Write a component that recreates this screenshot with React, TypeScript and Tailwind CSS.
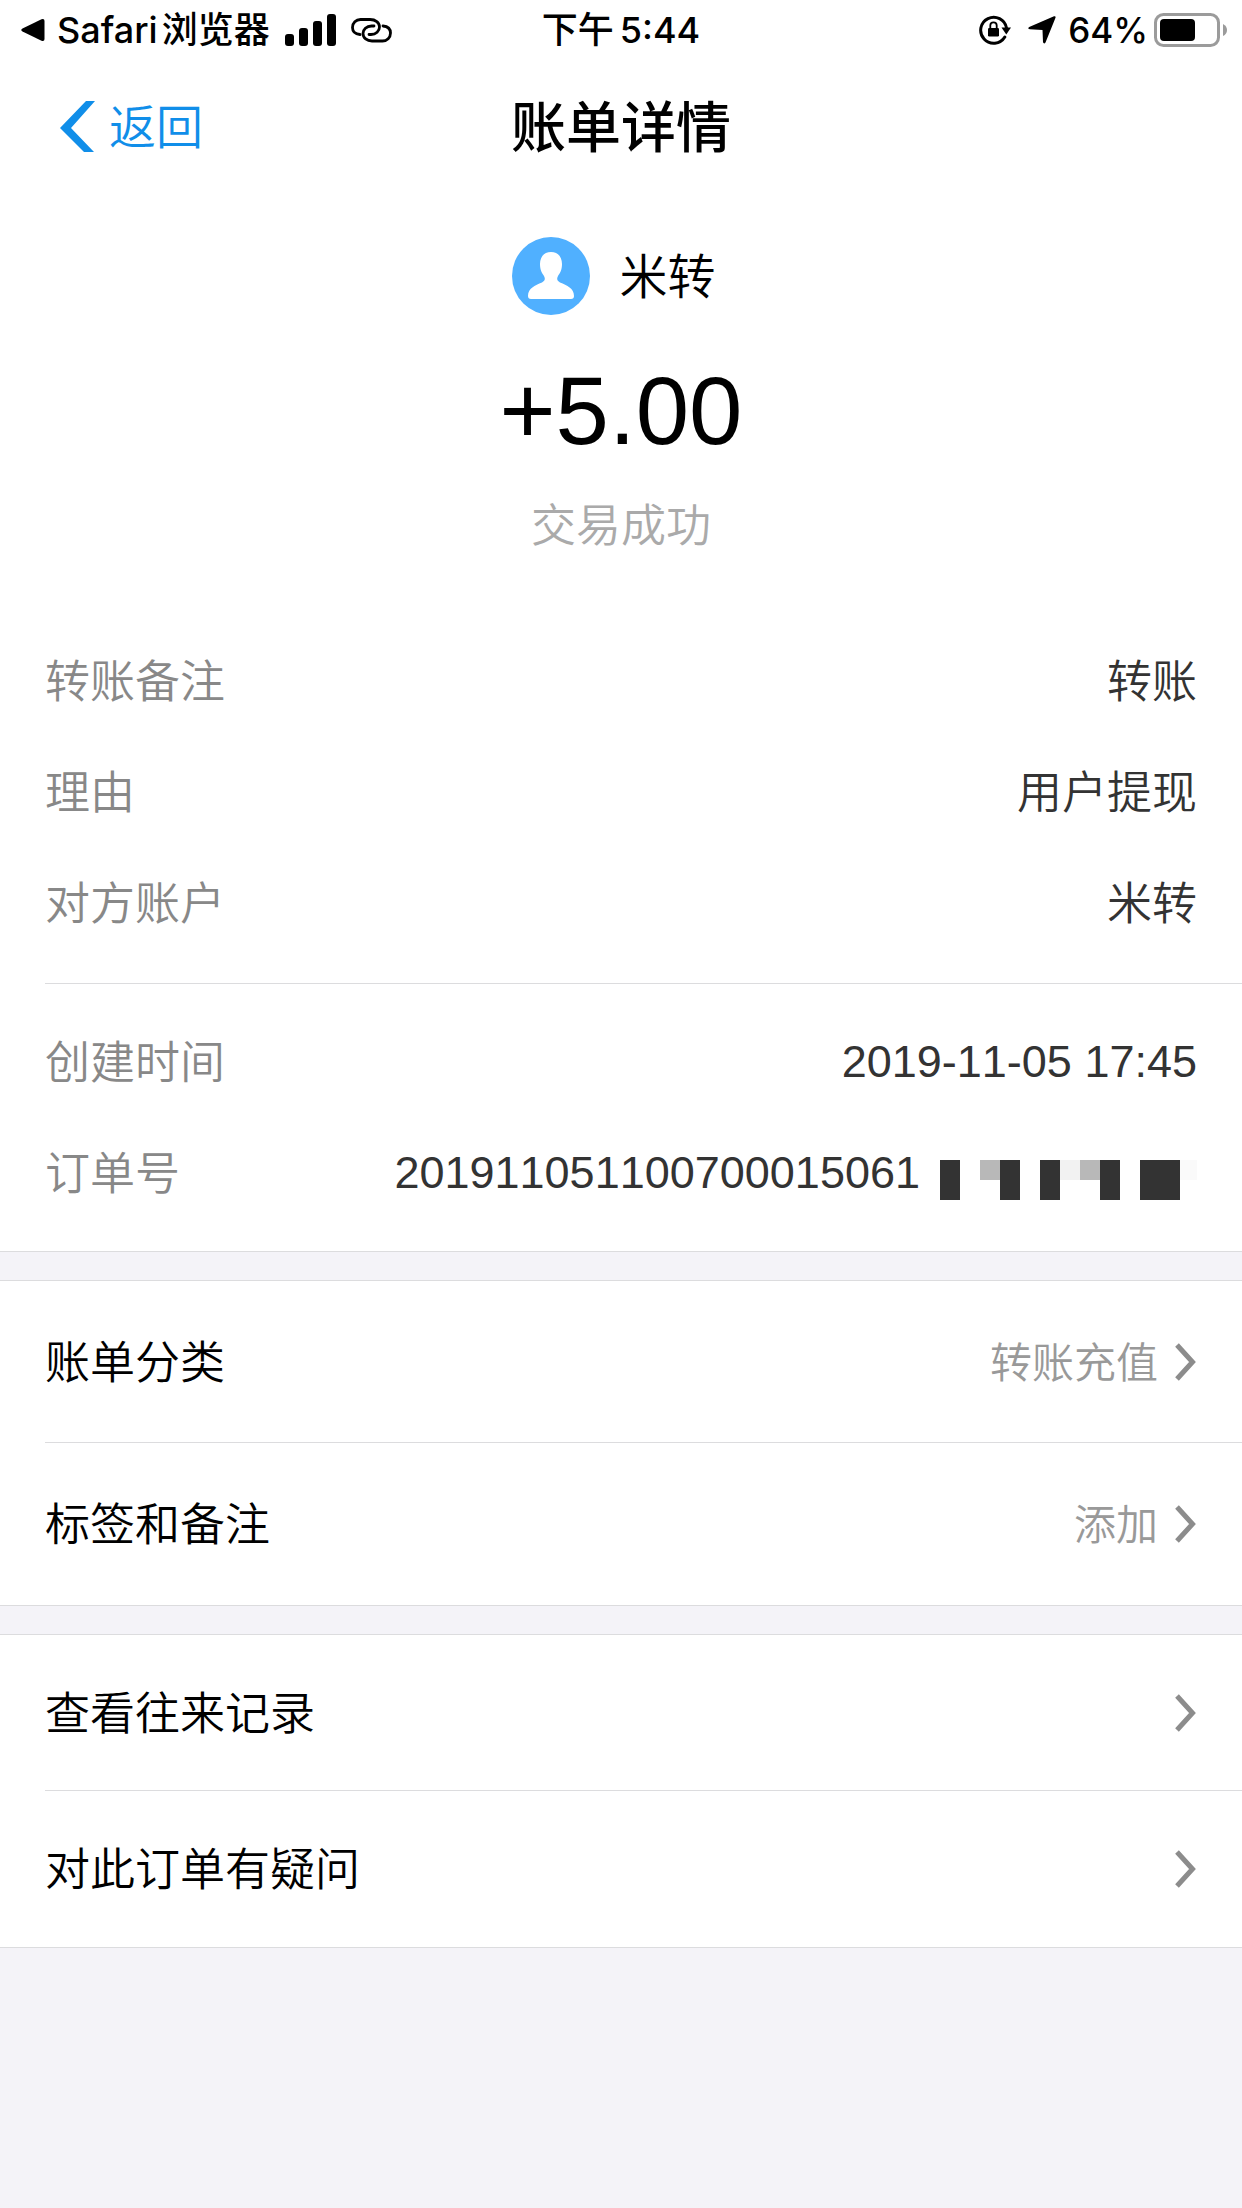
const details = [
  { label: "转账备注", value: "转账" },
  { label: "理由", value: "用户提现" },
  { label: "对方账户", value: "米转" },
];

const manageLinks = [
  { label: "账单分类", value: "转账充值" },
  { label: "标签和备注", value: "添加" },
];

const helpLinks = ["查看往来记录", "对此订单有疑问"];

function StatusBar() {
  return (
    <div className="grid h-[60px] grid-cols-[1fr_auto_1fr] items-center px-[15px] font-['Inter','Noto_Sans_CJK_SC',sans-serif] text-[36px] leading-[60px] font-medium whitespace-nowrap">
      <div className="flex items-center">
        <svg className="mr-3 ml-1.5 h-6 w-6" viewBox="0 0 24 24" aria-hidden="true">
          <path d="M1.5 10.5 20.5 1.2q3-1 3 1.8v18q0 2.8-3 1.8L1.5 13.5q-2.500-1.500 0-3z" />
        </svg>
        <span>Safari</span>
        <span className="ml-1">浏览器</span>
        <svg className="ml-[15px] h-8 w-[51px]" viewBox="0 0 51 32" aria-label="信号">
          <rect x="0" y="20" width="9" height="12" rx="3" />
          <rect x="14" y="14" width="9" height="18" rx="3" />
          <rect x="28" y="7" width="9" height="25" rx="3" />
          <rect x="42" y="0" width="9" height="32" rx="3" />
        </svg>
        <svg
          className="ml-[15px] h-[25px] w-[41px]"
          viewBox="0 0 41 25"
          fill="none"
          stroke="currentColor"
          strokeWidth="2.8"
          strokeLinecap="round"
          aria-hidden="true"
        >
          <path d="M9 16.500C4 16 1.500 13 1.500 9.500 1.500 5 5 1.500 9.500 1.500H19C24.500 1.500 28.500 4.500 28.500 9 28.500 13 25 16.500 20 16.500H18" />
          <path d="M32 8C37 8.500 39.500 11.500 39.500 15 39.500 19.500 36 23 31.500 23H21C16 23 12 20 12 15.500 12 11.500 15.500 8 20.500 8H23" />
        </svg>
      </div>
      <time className="flex gap-1.5">
        <span>下午</span>
        <span>5:44</span>
      </time>
      <div className="flex items-center justify-end">
        <svg className="h-[30px] w-8" viewBox="0 0 32 30" aria-label="方向锁定">
          <path
            d="M25.800 22A13 13 0 1 1 27.500 13"
            fill="none"
            stroke="currentColor"
            strokeWidth="3"
            strokeLinecap="round"
          />
          <path d="M22.500 12.500h9.500l-4.700 7z" />
          <rect x="9" y="13" width="11" height="8.500" rx="1.200" />
          <path d="M11.300 13.500v-3a3.200 3.200 0 0 1 6.400 0v3" fill="none" stroke="currentColor" strokeWidth="1.800" />
        </svg>
        <svg className="ml-[17px] h-7 w-7" viewBox="0 0 28 28" aria-label="定位">
          <path d="M26 .3q2-.5 1.500 1.500L17.500 26.500q-1.500 2-2.500-.2L14.500 14 1.700 13.300q-2.700-.8-.5-2.300z" />
        </svg>
        <span className="ml-3 text-[35px]">64%</span>
        <svg className="ml-1.5 h-[34px] w-[73px]" viewBox="0 0 73 34" aria-label="电量">
          <rect x="1.500" y="1.500" width="63" height="31" rx="8" fill="none" stroke="#9b9b9b" strokeWidth="3" />
          <rect x="6" y="6" width="35" height="22" rx="4" />
          <path d="M69 11q4 2 4 6t-4 6z" fill="#9b9b9b" />
        </svg>
      </div>
    </div>
  );
}

function NavBar() {
  return (
    <header className="grid h-[132px] grid-cols-[1fr_auto_1fr] items-center px-[60px]">
      <button type="button" className="flex items-center gap-3.5 justify-self-start text-[47px] leading-[60px] font-[350] text-[#108ee9]">
        <svg className="h-[51px] w-[35px]" viewBox="0 0 35 51" fill="currentColor" aria-hidden="true">
          <path d="M0 27 26 0h9L11 27l23 24H24z" />
        </svg>
        <span className="pt-1">返回</span>
      </button>
      <h1 className="pt-1 text-[55px] leading-[60px] font-medium">账单详情</h1>
    </header>
  );
}

function Avatar() {
  return (
    <svg className="h-[78px] w-[78px]" viewBox="0 0 78 78" aria-hidden="true">
      <circle cx="39" cy="39" r="39" fill="#50b0ff" />
      <path
        d="M39 15c7 0 11 5 11 12 0 6-2 9-4 12-1.500 3-1 5 2 6.500 7 3 14 5.500 14 13.500 0 2-1 3-3 3H19c-2 0-3-1-3-3 0-8 7-10.500 14-13.500 3-1.500 3.500-3.500 2-6.500-2-3-4-6-4-12 0-7 4-12 11-12z"
        fill="#fff"
      />
    </svg>
  );
}

function Mosaic() {
  return (
    <svg className="mb-7 h-10 w-[257px] self-end" viewBox="0 0 257 40" shapeRendering="crispEdges" aria-hidden="true">
      <path d="M0 0h20v40H0zM60 0h20v40H60zM100 0h20v40h-20zM160 0h20v40h-20zM200 0h40v40h-40z" fill="#333" />
      <path d="M40 0h20v20H40zM140 0h20v20h-20z" fill="#b8b8b8" />
      <path d="M120 0h20v20h-20z" fill="#f2f2f2" />
      <path d="M240 0h17v20h-17z" fill="#fafafa" />
    </svg>
  );
}

function DetailRow({ label, children }: { label: string; children: React.ReactNode }) {
  return (
    <div className="flex h-[111px] items-center justify-between pr-[45px]">
      <dt className="pt-1 text-[#888]">{label}</dt>
      <dd className="flex items-center gap-5 self-stretch text-[#333] [font-kerning:none]">{children}</dd>
    </div>
  );
}

function Chevron() {
  return (
    <svg
      className="h-[38px] w-[22px]"
      viewBox="0 0 22 38"
      fill="none"
      stroke="#8c8c8c"
      strokeWidth="5"
      aria-hidden="true"
    >
      <path d="M2 2 17.500 19 2 36" />
    </svg>
  );
}

export default function App() {
  return (
    <div className="min-h-screen bg-[#f4f3f8] font-['Liberation_Sans','Noto_Sans_CJK_SC',sans-serif] text-[45px] leading-[60px] font-[350] text-black">
      <div className="border-b border-[#dcdcde] bg-white">
        <StatusBar />
        <NavBar />

        <section className="flex flex-col items-center pt-[45px]">
          <div className="flex items-center gap-[29px] pr-3.5 text-[48px]">
            <Avatar />
            <span className="pt-1">米转</span>
          </div>
          <p className="mt-12 text-[96px] leading-[96px]">+5.00</p>
          <p className="mt-[38px] text-[#aaa]">交易成功</p>
        </section>

        <dl className="mt-[68px] ml-[45px] border-b border-[#dcdcde] pb-[25px]">
          {details.map((d) => (
            <DetailRow key={d.label} label={d.label}>
              <span className="pt-1">{d.value}</span>
            </DetailRow>
          ))}
        </dl>
        <dl className="ml-[45px] pt-[22px] pb-[23px]">
          <DetailRow label="创建时间">2019-11-05 17:45</DetailRow>
          <DetailRow label="订单号">
            <span>201911051100700015061</span>
            <Mosaic />
          </DetailRow>
        </dl>
      </div>

      <nav className="mt-7 divide-y divide-[#dcdcde] border-y border-[#dcdcde] bg-white pl-[45px]">
        {manageLinks.map((l) => (
          <a key={l.label} href="#" className="flex h-[162px] items-center justify-between pr-[45px]">
            <span className="pt-1">{l.label}</span>
            <span className="flex items-center gap-[17px] text-[42px] text-[#999]">
              <span className="pt-1">{l.value}</span>
              <Chevron />
            </span>
          </a>
        ))}
      </nav>

      <nav className="mt-7 divide-y divide-[#dcdcde] border-y border-[#dcdcde] bg-white pl-[45px]">
        {helpLinks.map((label) => (
          <a key={label} href="#" className="flex h-[156px] items-center justify-between pr-[45px]">
            <span className="pt-1">{label}</span>
            <Chevron />
          </a>
        ))}
      </nav>
    </div>
  );
}
